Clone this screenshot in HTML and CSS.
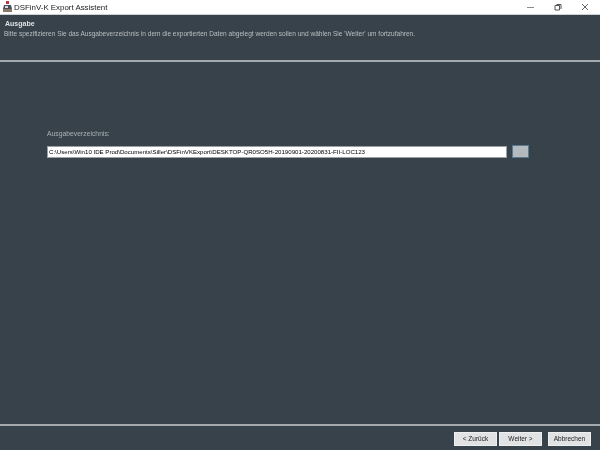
FILE: index.html
```html
<!DOCTYPE html>
<html lang="de">
<head>
<meta charset="utf-8">
<title>DSFinV-K Export Assistent</title>
<link rel="stylesheet" href="styles.css">
</head>
<body>
<div class="window">
  <header class="titlebar">
    <svg class="app-icon" width="12" height="12" viewBox="0 0 12 12">
      <rect x="4" y="0" width="3" height="3" fill="#c8323a"/>
      <path d="M2 4h7l1 4H1z" fill="#4a4f5c"/>
      <rect x="1" y="8" width="9" height="3" fill="#8a7a66"/>
      <rect x="3" y="5" width="3" height="2" fill="#d8dce0"/>
    </svg>
    <span class="app-title">DSFinV-K Export Assistent</span>
    <div class="win-controls">
      <svg width="8" height="8" viewBox="0 0 8 8"><path d="M0 4.500h7" stroke="#8a8a8a" stroke-width="1"/></svg>
      <svg width="8" height="8" viewBox="0 0 8 8"><path d="M2.500 1.500h4.500v4.500M1 2.500h4.500v4.500h-4.500z" fill="none" stroke="#555" stroke-width="1"/></svg>
      <svg width="8" height="8" viewBox="0 0 8 8"><path d="M1 1l6 6M7 1l-6 6" stroke="#666" stroke-width="1"/></svg>
    </div>
  </header>
  <section class="page-head">
    <div class="page-title">Ausgabe</div>
    <div class="page-desc">Bitte spezifizieren Sie das Ausgabeverzeichnis in dem die exportierten Daten abgelegt werden sollen und wählen Sie 'Weiter' um fortzufahren.</div>
  </section>
  <main class="content">
    <label class="field-label">Ausgabeverzeichnis:</label>
    <div class="field-row">
      <div class="path-input">C:\Users\Win10 IDE Prod\Documents\Siller\DSFinVKExport\DESKTOP-QR0SO5H-20190901-20200831-FII-LOC123</div>
      <button class="browse">...</button>
    </div>
  </main>
  <footer class="actions">
    <button class="btn">&lt; Zurück</button>
    <button class="btn">Weiter &gt;</button>
    <button class="btn btn-cancel">Abbrechen</button>
  </footer>
</div>
</body>
</html>
```
FILE: styles.css
```css
html, body {
  margin: 0;
  padding: 0;
}
body {
  background: #37424a;
  font-family: "Liberation Sans", Arial, sans-serif;
  overflow: hidden;
}
.window {
  width: 600px;
  height: 450px;
  display: flex;
  flex-direction: column;
  background: #37424a;
  filter: blur(0.4px);
}
.titlebar {
  height: 14px;
  flex: none;
  background: #fff;
  border-bottom: 1px solid #d0d3d5;
  display: flex;
  align-items: center;
  padding-left: 2px;
}
.app-icon {
  flex: none;
}
.app-title {
  font-size: 7.900px;
  color: #222;
}
.win-controls {
  margin-left: auto;
  display: flex;
  gap: 19px;
  padding-right: 11px;
}
.win-controls svg {
  display: block;
}
.page-head {
  height: 47px;
  flex: none;
  box-sizing: border-box;
  padding: 4px 0 0 4px;
  border-bottom: 2px solid #a3a9ac;
}
.page-title {
  font-size: 7px;
  font-weight: 700;
  line-height: 9px;
  margin-left: 1px;
  color: #dfe2e4;
}
.page-desc {
  font-size: 6.560px;
  line-height: 10px;
  margin-top: 1px;
  color: #b9bfc3;
}
.content {
  flex: 1;
  padding: 67px 0 0 47px;
  display: flex;
  flex-direction: column;
  align-items: flex-start;
}
.field-label {
  font-size: 6.800px;
  line-height: 9px;
  color: #aab1b6;
}
.field-row {
  display: flex;
  align-items: center;
  margin-top: 7px;
  gap: 5px;
}
.path-input {
  width: 460px;
  height: 12px;
  box-sizing: border-box;
  background: #fff;
  border: 1px solid #9aa0a4;
  font-size: 6.120px;
  line-height: 10px;
  padding-left: 1px;
  color: #000;
  white-space: nowrap;
  overflow: hidden;
}
.browse {
  width: 17px;
  height: 13px;
  padding: 0;
  background: #b4babd;
  border: 1px solid #5b7a92;
  font: 6px "Liberation Sans", Arial, sans-serif;
  line-height: 8px;
  color: #8f9598;
}
.actions {
  height: 26px;
  flex: none;
  box-sizing: border-box;
  border-top: 2px solid #a3a9ac;
  display: flex;
  justify-content: flex-end;
  align-items: flex-start;
  gap: 2px;
  padding: 6px 9px 0 0;
}
.btn {
  width: 43px;
  height: 14px;
  padding: 0;
  background: #e0e2e3;
  border: 1px solid #eeefef;
  font: 6.500px "Liberation Sans", Arial, sans-serif;
  line-height: 10px;
  color: #222;
}
.btn-cancel {
  margin-left: 4px;
}
```
